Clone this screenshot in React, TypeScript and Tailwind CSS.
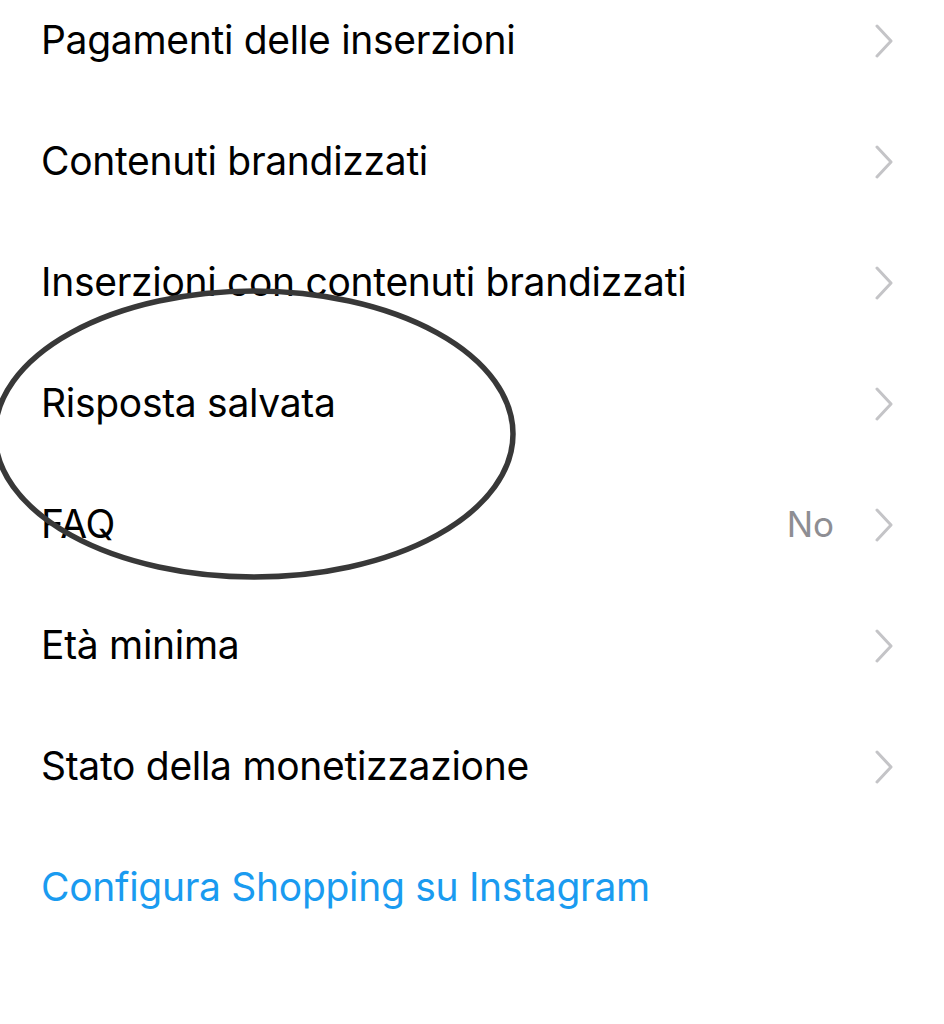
const rows: { label: string; value?: string }[] = [
  { label: "Pagamenti delle inserzioni" },
  { label: "Contenuti brandizzati" },
  { label: "Inserzioni con contenuti brandizzati" },
  { label: "Risposta salvata" },
  { label: "FAQ", value: "No" },
  { label: "Età minima" },
  { label: "Stato della monetizzazione" },
]

function Chevron() {
  return (
    <svg width="20" height="34" viewBox="0 0 20 34" fill="none">
      <path d="M3 2 L17 17 L3 32" stroke="#c4c4c7" strokeWidth="3" strokeLinecap="round" strokeLinejoin="round" />
    </svg>
  )
}

export default function App() {
  return (
    <div className="relative w-[944px] h-[1024px] overflow-hidden bg-white font-['Inter',sans-serif]">
      <div className="-mt-[20px] flex flex-col">
        {rows.map((row) => (
          <div key={row.label} className="flex h-[121px] items-center pl-[41px] pr-[50px]">
            <span className="flex-1 text-[39px] tracking-[-0.3px] text-black">{row.label}</span>
            {row.value && <span className="mr-[40px] text-[35px] text-[#8e8e93]">{row.value}</span>}
            <Chevron />
          </div>
        ))}
        <div className="flex h-[121px] items-center pl-[41px]">
          <span className="text-[39px] tracking-[-0.3px] text-[#1a9bf0]">Configura Shopping su Instagram</span>
        </div>
      </div>

      {/* hand-drawn circle */}
      <svg className="absolute left-0 top-0" width="944" height="1024" viewBox="0 0 944 1024" fill="none">
        <ellipse cx="254" cy="434" rx="259" ry="143" stroke="#383838" strokeWidth="5.5" />
      </svg>
    </div>
  )
}
